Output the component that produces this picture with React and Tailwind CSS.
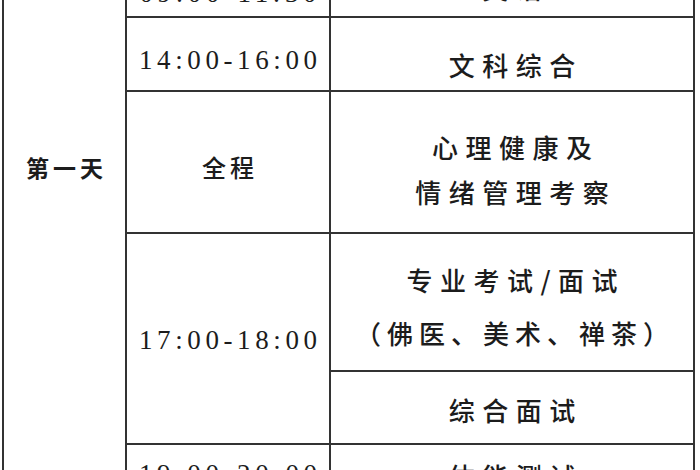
import React from 'react';

const cjk = { fontFamily: '"Noto Sans CJK SC", "Noto Sans", sans-serif' };
const serif = { fontFamily: '"Liberation Serif", "Noto Serif CJK SC", serif' };

const Cell = ({ className = '', children }) => (
    <div className={`bg-white flex flex-col items-center text-[#1c1c1c] ${className}`}>{children}</div>
);

const Time = ({ children, pt }) => (
    <div className={`text-[27px] leading-[30px] tracking-[4.6px] pl-[4.6px] whitespace-nowrap ${pt}`} style={serif}>
        {children}
    </div>
);

const App = () => {
    return (
        <div className="w-[700px] h-[470px] overflow-hidden bg-white">
            {/* schedule table, scrolled so the first row is mostly cut off */}
            <div
                className="-mt-[37px] ml-[2px] w-[693px] grid grid-cols-[121px_202px_362px] grid-rows-[51px_72px_140px_136px_71px_65px] gap-[2px] p-[2px] bg-[#333]"
                style={cjk}
            >
                <Cell className="row-span-6">
                    <div className="pt-[187px] text-[23px] leading-[30px] font-bold tracking-[4px] pl-[4px]">第一天</div>
                </Cell>

                {/* row 1 (cropped) */}
                <Cell><Time pt="pt-[13px]">09:00-11:30</Time></Cell>
                <Cell>
                    <div className="pt-[8px] text-[26px] leading-[30px] font-medium tracking-[7.5px] pl-[7.5px]">英语</div>
                </Cell>

                {/* row 2 */}
                <Cell><Time pt="pt-[27px]">14:00-16:00</Time></Cell>
                <Cell>
                    <div className="pt-[32px] text-[26px] leading-[30px] font-medium tracking-[7.5px] pl-[7.5px]">文科综合</div>
                </Cell>

                {/* row 3 */}
                <Cell>
                    <div className="pt-[60px] text-[24px] leading-[30px] font-medium tracking-[4px] pl-[4px]">全程</div>
                </Cell>
                <Cell>
                    <div className="pt-[32px] text-[26px] leading-[45px] font-medium tracking-[7.5px] pl-[7.5px] text-center">
                        <div>心理健康及</div>
                        <div>情绪管理考察</div>
                    </div>
                </Cell>

                {/* row 4 */}
                <Cell className="row-span-2"><Time pt="pt-[91px]">17:00-18:00</Time></Cell>
                <Cell>
                    <div className="pt-[19px] text-[26px] leading-[53px] font-medium text-center">
                        <div className="tracking-[7.5px] pl-[7.5px]">专业考试/面试</div>
                        <div className="tracking-[6px] pl-[6px] whitespace-nowrap">（佛医、美术、禅茶）</div>
                    </div>
                </Cell>
                <Cell>
                    <div className="pt-[23px] text-[26px] leading-[30px] font-medium tracking-[7.5px] pl-[7.5px]">综合面试</div>
                </Cell>

                {/* row 5 (cropped) */}
                <Cell><Time pt="pt-[14px]">19:00-20:00</Time></Cell>
                <Cell>
                    <div className="pt-[16px] text-[26px] leading-[30px] font-medium tracking-[7.5px] pl-[7.5px]">体能测试</div>
                </Cell>
            </div>
        </div>
    );
};

export default App;
